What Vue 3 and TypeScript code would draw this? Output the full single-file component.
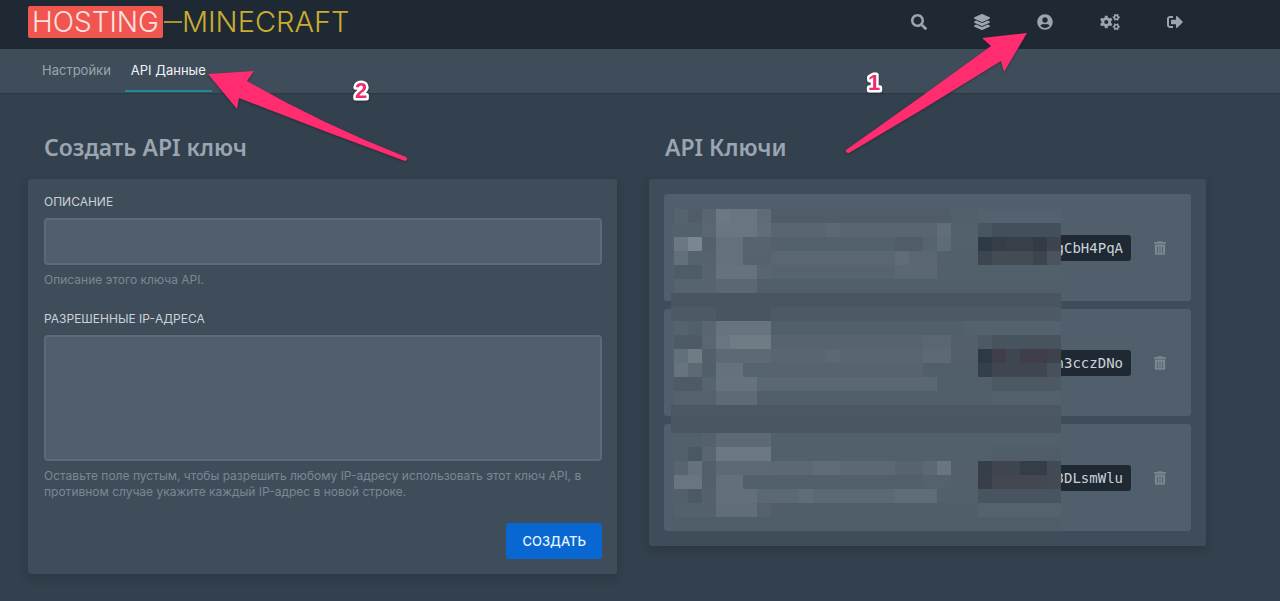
<script setup lang="ts">
interface NavItem {
  label: string
  viewBox: string
  width: number
  path: string
}

interface Tab {
  label: string
  active: boolean
}

type Block = [col: number, row: number, cols: number, rows: number, fill: string]

function gear(cx: number, cy: number, outer: number, inner: number, hole: number, start: number): string {
  const teeth = 6
  const step = (Math.PI * 2) / teeth
  const point = (r: number, a: number) =>
    `${(cx + r * Math.cos(a)).toFixed(1)} ${(cy + r * Math.sin(a)).toFixed(1)}`
  const points: string[] = []
  for (let i = 0; i < teeth; i++) {
    const a = start + i * step
    points.push(
      point(inner, a - step * 0.3),
      point(outer, a - step * 0.2),
      point(outer, a + step * 0.2),
      point(inner, a + step * 0.3),
    )
  }
  return (
    `M${points.join('L')}Z` +
    `M${cx - hole} ${cy}a${hole} ${hole} 0 1 0 ${hole * 2} 0a${hole} ${hole} 0 1 0 ${-hole * 2} 0Z`
  )
}

const cogs =
  gear(200, 256, 208, 156, 66, Math.PI / 2) +
  gear(520, 106, 116, 88, 38, 0) +
  gear(520, 406, 116, 88, 38, 0)

const navItems: NavItem[] = [
  {
    label: 'Поиск',
    viewBox: '0 0 512 512',
    width: 16,
    path: 'M505 442.7L405.3 343c-4.5-4.5-10.6-7-17-7H372c27.6-35.3 44-79.7 44-128C416 93.1 322.9 0 208 0S0 93.1 0 208s93.1 208 208 208c48.3 0 92.7-16.4 128-44v16.3c0 6.4 2.5 12.5 7 17l99.7 99.7c9.4 9.4 24.6 9.4 33.9 0l28.3-28.3c9.4-9.4 9.4-24.6.1-34zM208 336c-70.7 0-128-57.2-128-128 0-70.7 57.2-128 128-128 70.7 0 128 57.2 128 128 0 70.7-57.2 128-128 128z',
  },
  {
    label: 'Серверы',
    viewBox: '0 0 512 512',
    width: 16,
    path: 'M12.41 148.02l232.94 105.67c6.8 3.09 14.49 3.09 21.29 0l232.94-105.67c16.55-7.51 16.55-32.52 0-40.03L266.65 2.31a25.607 25.607 0 0 0-21.29 0L12.41 107.98c-16.55 7.51-16.55 32.53 0 40.04zm487.18 88.28l-58.09-26.33-161.64 73.27c-7.56 3.43-15.59 5.17-23.86 5.17s-16.29-1.74-23.86-5.17L70.51 209.97l-58.1 26.33c-16.55 7.5-16.55 32.5 0 40l232.94 105.59c6.8 3.08 14.49 3.08 21.29 0L499.59 276.3c16.55-7.5 16.55-32.5 0-40zm0 127.8l-57.87-26.23-161.86 73.37c-7.56 3.43-15.59 5.17-23.86 5.17s-16.29-1.74-23.86-5.17L70.29 337.87 12.41 364.1c-16.55 7.5-16.55 32.5 0 40l232.94 105.59c6.8 3.08 14.49 3.08 21.29 0L499.59 404.1c16.55-7.5 16.55-32.5 0-40z',
  },
  {
    label: 'Аккаунт',
    viewBox: '0 0 496 512',
    width: 16,
    path: 'M248 8C111 8 0 119 0 256s111 248 248 248 248-111 248-248S385 8 248 8zm0 96c48.6 0 88 39.4 88 88s-39.4 88-88 88-88-39.4-88-88 39.4-88 88-88zm0 344c-58.7 0-111.3-26.6-146.5-68.2 18.8-35.4 55.6-59.8 98.5-59.8 2.4 0 4.8.4 7.1 1.1 13 4.2 26.6 6.9 40.9 6.9 14.3 0 28-2.7 40.9-6.9 2.3-.7 4.7-1.1 7.1-1.1 42.9 0 79.7 24.4 98.5 59.8C359.3 421.4 306.7 448 248 448z',
  },
  { label: 'Администрирование', viewBox: '0 0 640 512', width: 20, path: cogs },
  {
    label: 'Выйти',
    viewBox: '0 0 512 512',
    width: 16,
    path: 'M497 273L329 441c-15 15-41 4.5-41-17v-96H152c-13.3 0-24-10.7-24-24v-96c0-13.3 10.7-24 24-24h136V88c0-21.4 25.9-32 41-17l168 168c9.3 9.4 9.3 24.6 0 34zM192 436v-40c0-6.6-5.4-12-12-12H96c-17.7 0-32-14.3-32-32V160c0-17.7 14.3-32 32-32h84c6.6 0 12-5.4 12-12V76c0-6.6-5.4-12-12-12H96c-53 0-96 43-96 96v192c0 53 43 96 96 96h84c6.6 0 12-5.4 12-12z',
  },
]

const trash =
  'M32 464a48 48 0 0 0 48 48h288a48 48 0 0 0 48-48V128H32zm272-256a16 16 0 0 1 32 0v224a16 16 0 0 1-32 0zm-96 0a16 16 0 0 1 32 0v224a16 16 0 0 1-32 0zm-96 0a16 16 0 0 1 32 0v224a16 16 0 0 1-32 0zM432 32H312l-9.4-18.7A24 24 0 0 0 281.1 0H166.8a23.72 23.72 0 0 0-21.4 13.3L136 32H16A16 16 0 0 0 0 48v32a16 16 0 0 0 16 16h416a16 16 0 0 0 16-16V48a16 16 0 0 0-16-16z'

const tabs: Tab[] = [
  { label: 'Настройки', active: false },
  { label: 'API Данные', active: true },
]

const keys: string[] = ['gCbH4PqA', 'n3cczDNo', '3DLsmWlu']

// Privacy mask over the key list, on a grid of 28 columns and 23 rows.
// Blocks that span the whole row also fill the narrow margin left of the grid.
const columns = 28
const margin = 0.25

const blocks: Block[] = [
  [0, 0, 28, 1, '#505d69'],
  [0, 0, 1, 1, '#556370'], [2, 0, 1, 1, '#596672'], [3, 0, 1, 1, '#6d7884'], [4, 0, 2, 1, '#697580'], [6, 0, 1, 1, '#5f6b77'],
  [20, 0, 2, 1, '#52606c'], [22, 0, 6, 1, '#54626f'],
  [0, 1, 28, 1, '#53616d'],
  [2, 1, 1, 1, '#5a6773'], [3, 1, 3, 1, '#697580'], [6, 1, 1, 1, '#616e79'], [7, 1, 12, 1, '#596672'], [11, 1, 1, 1, '#5c6975'], [19, 1, 1, 1, '#606e79'],
  [22, 1, 1, 1, '#485562'], [23, 1, 5, 1, '#434f5b'],
  [0, 2, 28, 1, '#53606d'],
  [0, 2, 1, 1, '#6b7782'], [1, 2, 1, 1, '#7a8691'], [3, 2, 2, 1, '#64717d'], [5, 2, 2, 1, '#57646f'], [16, 2, 2, 1, '#505d69'], [18, 2, 1, 1, '#566370'], [19, 2, 1, 1, '#5f6b77'],
  [22, 2, 1, 1, '#303a46'], [23, 2, 1, 1, '#373d47'], [24, 2, 2, 1, '#3a4049'], [26, 2, 1, 1, '#353b45'], [27, 2, 1, 1, '#3d444e'],
  [0, 3, 28, 1, '#51606b'],
  [0, 3, 1, 1, '#61707b'], [1, 3, 1, 1, '#55626f'], [2, 3, 1, 1, '#56636f'], [3, 3, 2, 1, '#64717d'], [5, 3, 2, 1, '#56636f'], [7, 3, 12, 1, '#5a6773'], [16, 3, 1, 1, '#606d79'],
  [22, 3, 1, 1, '#3c4651'], [23, 3, 3, 1, '#434b55'], [26, 3, 1, 1, '#3c444e'], [27, 3, 1, 1, '#4a535e'],
  [0, 4, 28, 1, '#52606c'],
  [0, 4, 2, 1, '#4e5c68'], [2, 4, 1, 1, '#576470'], [3, 4, 3, 1, '#66737e'], [6, 4, 1, 1, '#596672'], [7, 4, 9, 1, '#576470'], [16, 4, 3, 1, '#5b6874'],
  [0, 5, 28, 1, '#515f6b'],
  [0, 5, 3, 1, '#566370'], [3, 5, 3, 1, '#5b6773'],
  [0, 6, 28, 1, '#495662'],
  [0, 7, 28, 1, '#4d5a66'],
  [3, 7, 4, 1, '#495662'],
  [0, 8, 28, 1, '#505f6b'],
  [0, 8, 1, 1, '#556370'], [2, 8, 1, 1, '#596672'], [3, 8, 4, 1, '#67737e'], [21, 8, 7, 1, '#54616e'],
  [0, 9, 28, 1, '#53606c'],
  [0, 9, 2, 1, '#4c5b67'], [2, 9, 1, 1, '#5a6773'], [3, 9, 1, 1, '#697580'], [4, 9, 3, 1, '#707b86'], [7, 9, 11, 1, '#57646f'], [18, 9, 2, 1, '#5a6773'],
  [22, 9, 1, 1, '#4d5a66'], [23, 9, 5, 1, '#475460'],
  [0, 10, 28, 1, '#53606c'],
  [0, 10, 1, 1, '#62707b'], [1, 10, 1, 1, '#707b86'], [3, 10, 4, 1, '#5d6a76'], [7, 10, 11, 1, '#596672'], [11, 10, 1, 1, '#5c6974'], [18, 10, 2, 1, '#5d6a76'],
  [22, 10, 1, 1, '#2e3946'], [23, 10, 1, 1, '#403f49'], [24, 10, 1, 1, '#3f464f'], [25, 10, 2, 1, '#403f49'], [27, 10, 1, 1, '#3c434d'],
  [0, 11, 28, 1, '#515f6b'],
  [0, 11, 1, 1, '#67747f'], [1, 11, 1, 1, '#5d6a76'], [3, 11, 2, 1, '#65727e'], [5, 11, 2, 1, '#566370'], [7, 11, 11, 1, '#57646f'],
  [22, 11, 1, 1, '#333f4b'], [23, 11, 4, 1, '#3e4751'], [27, 11, 1, 1, '#47515c'],
  [0, 12, 28, 1, '#515f6b'],
  [0, 12, 2, 1, '#4c5b67'], [2, 12, 1, 1, '#566370'], [3, 12, 3, 1, '#66737e'], [6, 12, 13, 1, '#5b6874'], [23, 12, 5, 1, '#4c5965'],
  [0, 13, 28, 1, '#505f6b'],
  [0, 13, 3, 1, '#55626e'], [3, 13, 3, 1, '#5e6b77'], [23, 13, 5, 1, '#53616d'],
  [0, 14, 28, 1, '#4b5864'],
  [0, 15, 28, 1, '#4a5763'],
  [0, 16, 28, 1, '#52606c'],
  [2, 16, 1, 1, '#55626e'], [3, 16, 4, 1, '#5d6a76'],
  [0, 17, 28, 1, '#52606c'],
  [1, 17, 1, 1, '#4a5864'], [2, 17, 1, 1, '#596672'], [3, 17, 4, 1, '#6c7883'], [23, 17, 5, 1, '#4e5d69'],
  [0, 18, 28, 1, '#53606c'],
  [0, 18, 1, 1, '#586571'], [1, 18, 1, 1, '#65727e'], [3, 18, 4, 1, '#5d6a76'], [7, 18, 11, 1, '#5c6975'], [10, 18, 2, 1, '#606d79'], [16, 18, 2, 1, '#576470'], [18, 18, 1, 1, '#5c6975'], [19, 18, 1, 1, '#697580'],
  [22, 18, 1, 1, '#353f4a'], [23, 18, 2, 1, '#3e454f'], [25, 18, 2, 1, '#353d47'], [27, 18, 1, 1, '#414a55'],
  [0, 19, 28, 1, '#52606b'],
  [0, 19, 2, 1, '#697580'], [3, 19, 2, 1, '#63707b'], [5, 19, 13, 1, '#52606b'], [18, 19, 2, 1, '#54616e'],
  [22, 19, 1, 1, '#363f4a'], [23, 19, 4, 1, '#444750'], [27, 19, 1, 1, '#414a55'],
  [0, 20, 28, 1, '#52606c'],
  [1, 20, 1, 1, '#4c5a66'], [2, 20, 1, 1, '#55626e'], [3, 20, 3, 1, '#63707b'], [6, 20, 10, 1, '#5c6975'], [9, 20, 1, 1, '#606d79'], [16, 20, 3, 1, '#606d79'],
  [22, 20, 6, 1, '#485561'],
  [0, 21, 28, 1, '#505d6a'],
  [0, 21, 3, 1, '#53616d'], [3, 21, 3, 1, '#616e79'], [6, 21, 1, 1, '#55626e'], [22, 21, 6, 1, '#54626e'],
  [0, 22, 28, 1, '#4f5d69'],
]
</script>

<template>
  <div class="page">
    <header class="topbar">
      <a class="logo" href="#"><span class="logo-badge">HOSTING</span><span class="logo-dash" aria-hidden="true"></span><span class="logo-name">MINECRAFT</span></a>
      <nav class="topnav">
        <a v-for="item in navItems" :key="item.label" href="#" :aria-label="item.label">
          <svg :viewBox="item.viewBox" :width="item.width" height="16" aria-hidden="true">
            <path :d="item.path" fill="currentColor" fill-rule="evenodd" />
          </svg>
        </a>
      </nav>
    </header>

    <nav class="subnav">
      <a v-for="tab in tabs" :key="tab.label" href="#" :class="{ active: tab.active }">{{ tab.label }}</a>
    </nav>

    <main class="content">
      <section>
        <h2>Создать API ключ</h2>
        <form class="panel form" @submit.prevent>
          <label for="description">Описание</label>
          <input id="description" type="text" />
          <p class="hint">Описание этого ключа API.</p>
          <label class="second" for="allowed-ips">Разрешенные IP-адреса</label>
          <textarea id="allowed-ips"></textarea>
          <p class="hint">
            Оставьте поле пустым, чтобы разрешить любому IP-адресу использовать этот ключ API, в
            противном случае укажите каждый IP-адрес в новой строке.
          </p>
          <div class="actions"><button class="submit" type="submit">Создать</button></div>
        </form>
      </section>

      <section>
        <h2>API Ключи</h2>
        <div class="panel">
          <div class="keys">
            <div v-for="key in keys" :key="key" class="key-row">
              <code>{{ key }}</code>
              <button class="delete" type="button" aria-label="Удалить">
                <svg viewBox="0 0 448 512" width="12" height="14" aria-hidden="true">
                  <path :d="trash" fill="currentColor" />
                </svg>
              </button>
            </div>
            <div class="mask" aria-hidden="true">
              <svg
                :viewBox="`${-margin} 0 ${columns + margin} 23`"
                preserveAspectRatio="none"
                shape-rendering="crispEdges"
              >
                <rect
                  v-for="(b, i) in blocks"
                  :key="i"
                  :x="b[2] === columns ? -margin : b[0]"
                  :y="b[1]"
                  :width="b[2] === columns ? columns + margin : b[2]"
                  :height="b[3]"
                  :fill="b[4]"
                />
              </svg>
            </div>
          </div>
        </div>
      </section>
    </main>

    <svg class="callout callout-two" width="220" height="100" viewBox="200 65 220 100">
      <path
        d="M208 74L254 71L247 81Q322 124 406 157Q409 160 405 161Q322 131 239 98L237 109Z"
        fill="#ff2d6f"
      />
      <text x="361" y="98">2</text>
    </svg>
    <svg class="callout callout-one" width="190" height="130" viewBox="840 28 190 130">
      <path
        d="M1027 33L982 38L991 46Q920 98 846 150Q845 153 849 153Q926 108 1001 61L1004 72Z"
        fill="#ff2d6f"
      />
      <text x="874" y="90">1</text>
    </svg>
  </div>
</template>

<style>
body {
  margin: 0;
  background: #33404d;
}
</style>

<style scoped>
.page {
  position: relative;
  min-height: 100vh;
  background: #33404d;
  color: #cbd2d9;
  font-family: Inter, 'Liberation Sans', sans-serif;
  overflow-x: hidden;
}

.page * {
  box-sizing: border-box;
}

a {
  color: inherit;
  text-decoration: none;
}

.topbar {
  display: flex;
  align-items: center;
  justify-content: space-between;
  height: 49px;
  padding: 0 74px 5px 28px;
  background: #1f2933;
}

.logo {
  display: flex;
  align-items: center;
  font-size: 28px;
  font-weight: 300;
  line-height: 32px;
}

.logo-badge {
  padding: 0 4px;
  border-radius: 2px;
  background: #f0554f;
  color: #fbe3e1;
}

.logo-dash {
  width: 18px;
  height: 2px;
  margin: 0 0 0 1px;
  background: #a8942c;
}

.logo-name {
  color: #c9ad2f;
  font-size: 29px;
}

.topnav {
  display: flex;
  gap: 1px;
  color: #9aa5b1;
}

.topnav a {
  display: flex;
  padding: 0 23px;
}

.subnav {
  display: flex;
  gap: 8px;
  height: 44px;
  padding: 0 36px 1px;
  background: #3f4d5a;
  box-shadow: 0 1px 1px #2d3945;
  color: #9aa5b1;
  font-size: 13px;
  line-height: 42px;
}

.subnav a {
  padding: 0 6px;
}

.subnav .active {
  color: #f0f3f6;
  box-shadow: inset 0 -2px #188a98;
}

.content {
  display: grid;
  grid-template-columns: 589fr 557fr;
  gap: 32px;
  align-items: start;
  margin: 38px 74px 0 28px;
}

h2 {
  margin: 0 0 16px;
  padding: 0 16px;
  color: #9aa5b1;
  font-family: 'Noto Sans', sans-serif;
  font-size: 23px;
  font-weight: 600;
  line-height: 32px;
}

.panel {
  padding: 15px;
  border-radius: 3px;
  background: #3f4d5a;
  box-shadow: 0 4px 10px rgba(31, 35, 51, 0.3);
}

.form {
  padding-left: 16px;
}

label {
  display: block;
  margin-bottom: 8px;
  color: #cbd2d9;
  font-size: 12px;
  line-height: 16px;
  text-transform: uppercase;
}

label.second {
  margin-top: 23px;
}

input,
textarea {
  display: block;
  width: 100%;
  height: 47px;
  margin: 0;
  padding: 12px;
  border: 2px solid #5d6a78;
  border-radius: 4px;
  outline: none;
  background: #515f6c;
  color: #cbd2d9;
  font: inherit;
  resize: none;
}

textarea {
  height: 126px;
}

.hint {
  margin: 7px 0 0;
  color: #7b8793;
  font-size: 12px;
  line-height: 16px;
}

.actions {
  display: flex;
  justify-content: flex-end;
  margin-top: 23px;
}

.submit {
  height: 36px;
  padding: 0 16px;
  border: 0;
  border-radius: 3px;
  background: #0967d2;
  color: #e6f6ff;
  font: inherit;
  font-size: 13px;
  font-weight: 500;
  text-transform: uppercase;
}

.keys {
  position: relative;
  display: grid;
  gap: 8px;
}

.key-row {
  display: flex;
  align-items: center;
  justify-content: flex-end;
  height: 107px;
  padding-right: 25px;
  border-radius: 3px;
  background: #515f6c;
}

code {
  width: 154px;
  padding: 0 8px;
  border-radius: 3px;
  background: #1f2933;
  color: #cbd2d9;
  font-family: 'DejaVu Sans Mono', monospace;
  font-size: 14px;
  line-height: 26px;
  text-align: right;
}

.delete {
  display: flex;
  margin-left: 23px;
  padding: 0;
  border: 0;
  background: none;
  color: #7b8793;
}

.mask {
  position: absolute;
  inset: 13px 130px 0 7px;
  padding-top: 2px;
  background: #515f6c;
}

.mask svg {
  display: block;
  width: 100%;
  height: 100%;
}

.callout {
  position: absolute;
  pointer-events: none;
  filter: drop-shadow(0 1px 1px rgba(20, 26, 36, 0.5));
}

.callout-two {
  top: 65px;
  left: 200px;
}

.callout-one {
  top: 28px;
  right: 250px;
}

.callout text {
  fill: #ec2c6c;
  stroke: #fff;
  stroke-width: 5px;
  stroke-linejoin: round;
  paint-order: stroke;
  font-family: 'Liberation Sans', sans-serif;
  font-size: 22px;
  font-weight: 700;
  text-anchor: middle;
}
</style>
